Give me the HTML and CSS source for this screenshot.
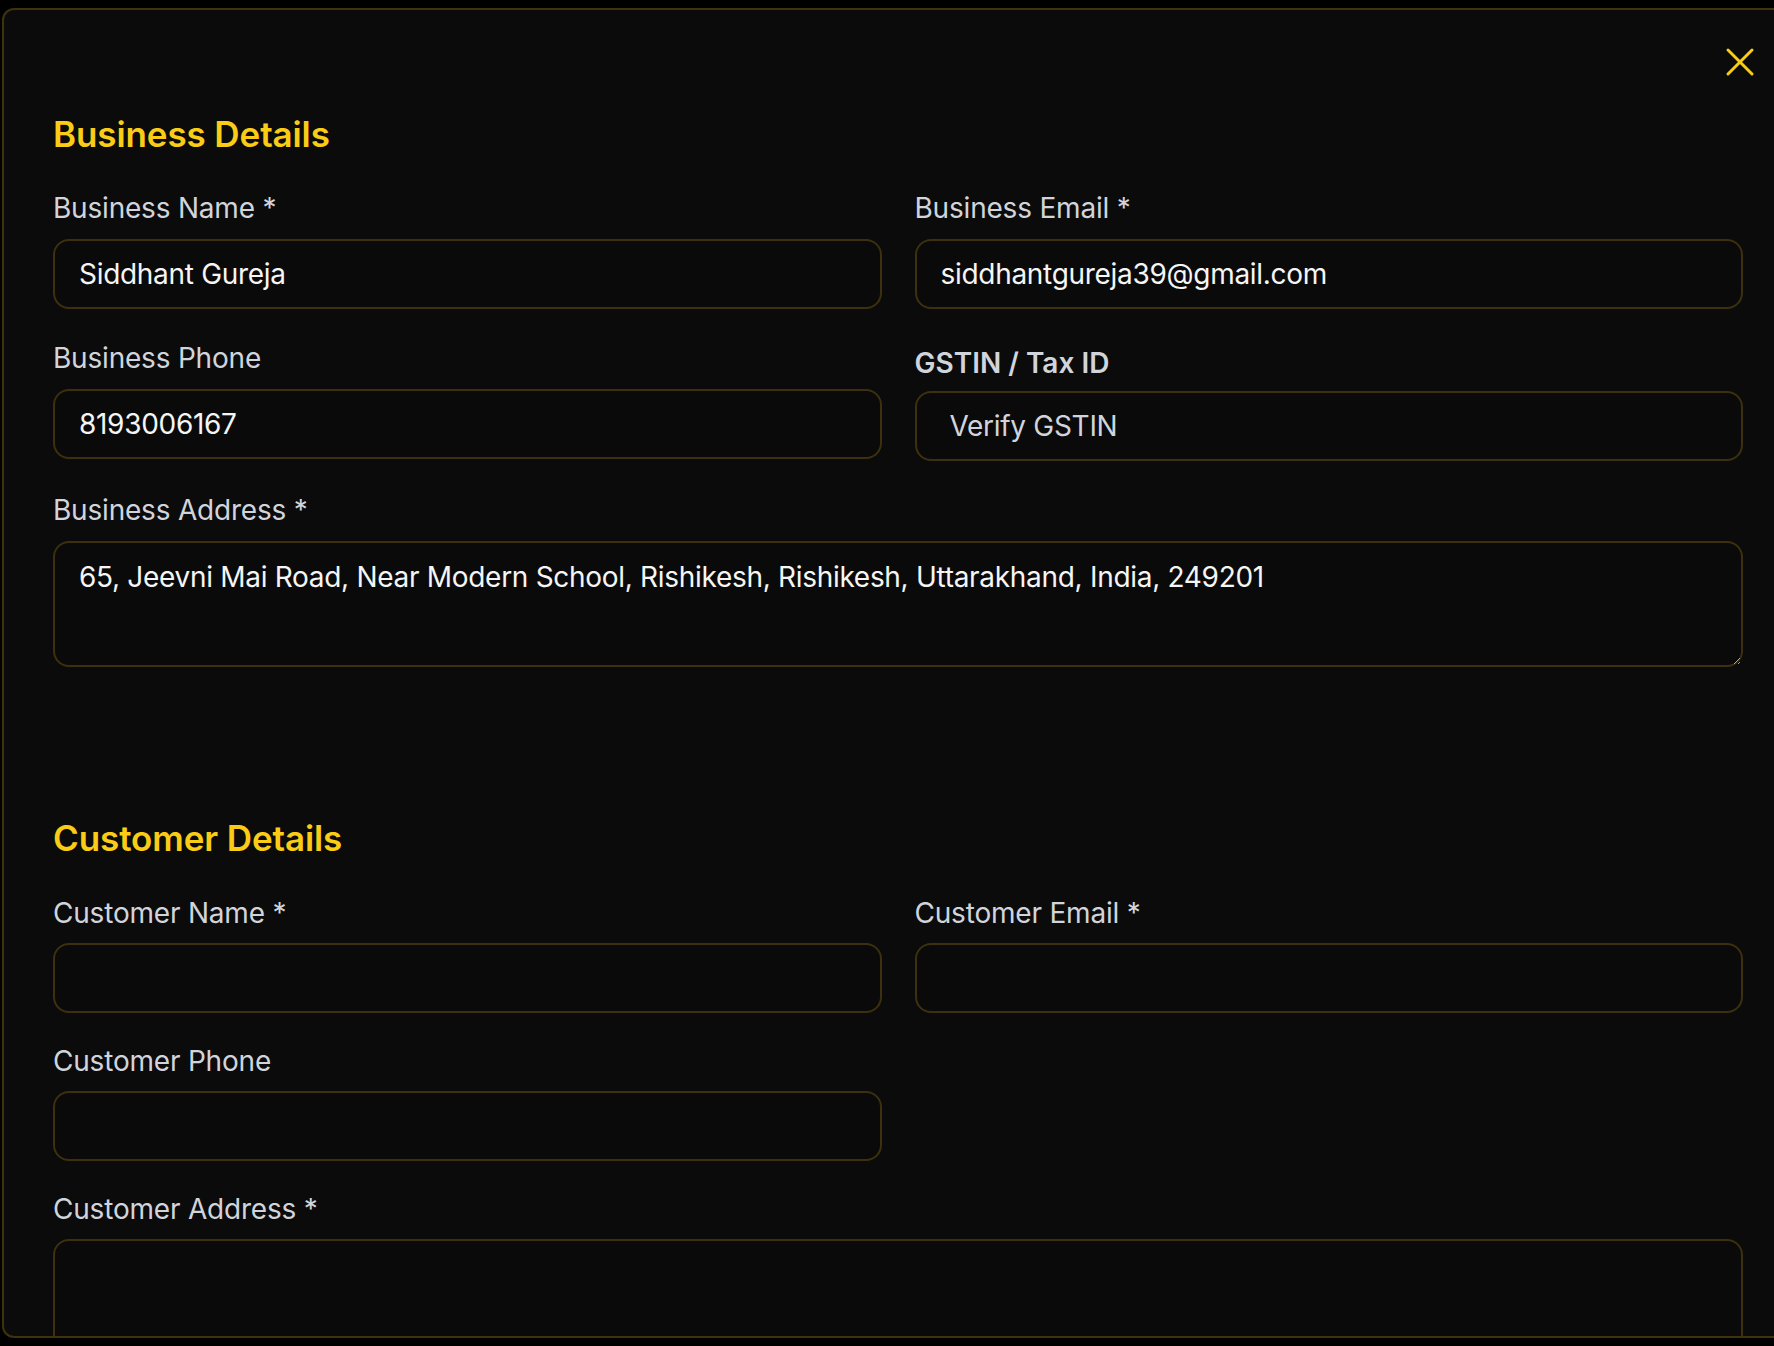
FILE: index.html
```html
<!DOCTYPE html>
<html lang="en">
<head>
<meta charset="utf-8">
<title>Invoice Details</title>
<link rel="stylesheet" href="styles.css">
</head>
<body>
<div class="modal">
  <button class="close" type="button" aria-label="Close">
    <svg viewBox="0 0 24 24" width="48" height="48" fill="none" stroke="currentColor" stroke-width="1.5" stroke-linecap="round" stroke-linejoin="round"><path d="M18 6 6 18"/><path d="m6 6 12 12"/></svg>
  </button>

  <section class="section">
    <h2 class="section-title">Business Details</h2>
    <div class="grid">
      <div class="field">
        <label class="label">Business Name *</label>
        <input class="input" type="text" value="Siddhant Gureja">
      </div>
      <div class="field">
        <label class="label">Business Email *</label>
        <input class="input" type="text" value="siddhantgureja39@gmail.com">
      </div>
      <div class="field">
        <label class="label">Business Phone</label>
        <input class="input" type="text" value="8193006167">
      </div>
      <div class="field field-gstin">
        <label class="label label-strong">GSTIN / Tax ID</label>
        <input class="input input-gstin" type="text" placeholder="Verify GSTIN">
      </div>
      <div class="field field-wide">
        <label class="label">Business Address *</label>
        <textarea class="input textarea">65, Jeevni Mai Road, Near Modern School, Rishikesh, Rishikesh, Uttarakhand, India, 249201</textarea>
      </div>
    </div>
  </section>

  <section class="section section-customer">
    <h2 class="section-title">Customer Details</h2>
    <div class="grid">
      <div class="field">
        <label class="label">Customer Name *</label>
        <input class="input" type="text">
      </div>
      <div class="field">
        <label class="label">Customer Email *</label>
        <input class="input" type="text">
      </div>
      <div class="field">
        <label class="label">Customer Phone</label>
        <input class="input" type="text">
      </div>
      <div class="field"></div>
      <div class="field field-wide">
        <label class="label">Customer Address *</label>
        <textarea class="input textarea textarea-tall"></textarea>
      </div>
    </div>
  </section>
</div>
</body>
</html>
```

FILE: styles.css
```css
html, body {
  margin: 0;
  padding: 0;
  background: #000;
  height: 1346px;
  overflow: hidden;
}

body {
  font-family: "Inter", "Liberation Sans", sans-serif;
}

.modal {
  position: relative;
  box-sizing: border-box;
  margin: 8px 0 0 2px;
  width: 1792px;
  height: 1330px;
  padding: 104px 49px 0 49px;
  background: #0b0b0b;
  border: 2px solid #3f320e;
  border-radius: 12px;
  overflow: hidden;
}

.close {
  position: absolute;
  top: 28px;
  right: 28px;
  width: 48px;
  height: 48px;
  padding: 0;
  border: 0;
  background: none;
  color: #facc15;
  cursor: pointer;
}

.close svg {
  display: block;
}

.section-title {
  margin: 0 0 33px 0;
  font-size: 35px;
  line-height: 41px;
  font-weight: 600;
  color: #facc15;
  letter-spacing: -0.1px;
}

.section-customer {
  margin-top: 151px;
}

.section-customer .section-title {
  margin-bottom: 34px;
}

.grid {
  display: grid;
  grid-template-columns: 1fr 1fr;
  column-gap: 33px;
  row-gap: 29px;
}

.section-customer .grid {
  row-gap: 28px;
}

.field {
  display: flex;
  flex-direction: column;
  gap: 11px;
}

.section-customer .field {
  gap: 10px;
}

.field-wide {
  grid-column: 1 / -1;
}

.label {
  display: block;
  font-size: 28px;
  line-height: 40px;
  font-weight: 400;
  color: #d1d5db;
  letter-spacing: -0.2px;
}

.label-strong {
  font-weight: 600;
  margin-top: 5px;
  letter-spacing: 0;
}

.field-gstin {
  gap: 8px;
}

.input {
  box-sizing: border-box;
  width: 100%;
  height: 70px;
  margin: 0;
  padding: 0 24px;
  font-family: "Inter", "Liberation Sans", sans-serif;
  font-size: 28px;
  color: #f5f5f5;
  background: #0a0a0a;
  border: 2px solid #3d300f;
  border-radius: 16px;
  outline: none;
  letter-spacing: -0.3px;
}

.input-gstin {
  padding-left: 33px;
}

.input-gstin::placeholder {
  color: #d1d5db;
  opacity: 1;
}

.textarea {
  height: 126px;
  padding: 13px 24px;
  line-height: 42px;
  resize: vertical;
  color-scheme: dark;
  display: block;
}

.textarea-tall {
  height: 240px;
}
```
